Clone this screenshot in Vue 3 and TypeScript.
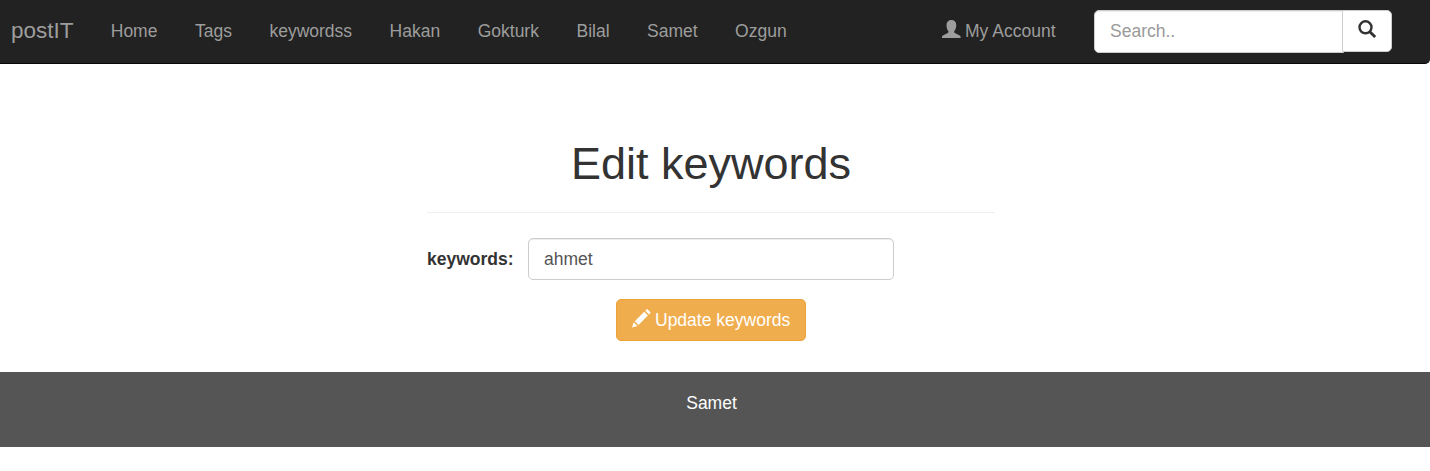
<script setup lang="ts">
import { ref } from 'vue'

const links: string[] = ['Home', 'Tags', 'keywordss', 'Hakan', 'Gokturk', 'Bilal', 'Samet', 'Ozgun']
const keyword = ref<string>('ahmet')
const query = ref<string>('')
</script>

<template>
  <div class="page">
    <nav class="navbar">
      <a class="brand">postIT</a>
      <ul class="links">
        <li v-for="link in links" :key="link"><a>{{ link }}</a></li>
      </ul>
      <a class="account">
        <svg class="icon" viewBox="0 0 19 19" aria-hidden="true">
          <path d="M9.400 0C6.300 0 4.500 2 4.500 5c0 2.800.8 5.200 2 6.500v.6c0 .5-.3.8-.8 1L1.300 15.200C.3 15.700 0 16.200 0 17.200V18h18.600v-.8c0-1-.3-1.500-1.300-2l-4.400-2.100c-.5-.2-.8-.5-.8-1v-.6c1.200-1.300 2.200-3.700 2.200-6.500C14.300 2 12.500 0 9.400 0z" />
        </svg>
        <span>My Account</span>
      </a>
      <form class="search" @submit.prevent>
        <input v-model="query" class="field search-field" type="text" placeholder="Search.." />
        <button class="search-button" type="submit" aria-label="Search">
          <svg class="icon" viewBox="0 0 19 19" aria-hidden="true">
            <circle cx="7.500" cy="7.300" r="6" fill="none" stroke="currentColor" stroke-width="2.400" />
            <path d="M11.800 11.700l5.400 5.300" fill="none" stroke="currentColor" stroke-width="2.900" />
          </svg>
        </button>
      </form>
    </nav>

    <main class="content">
      <h1>Edit keywords</h1>
      <hr />
      <form @submit.prevent>
        <div class="row">
          <label for="keywords">keywords:</label>
          <input id="keywords" v-model="keyword" class="field keyword-field" type="text" />
        </div>
        <button class="update" type="submit">
          <svg class="icon" viewBox="0 0 19 19" aria-hidden="true">
            <path d="M14.600 .4c.4-.4.800-.4 1.200 0l2.500 2.500c.4.4.4.800 0 1.200l-1.300 1.300-3.700-3.700zM12.200 2.800l3.700 3.700-9.400 9.400-3.700-3.700zM1.700 13.300l3.700 3.700L0 18.500z" />
          </svg>
          <span>Update keywords</span>
        </button>
      </form>
    </main>

    <footer class="footer">Samet</footer>
  </div>
</template>

<style>
body {
  margin: 0;
  background: #fff;
}
</style>

<style scoped>
.page,
.page * {
  box-sizing: border-box;
}

.page {
  color: #333;
  font: 17.5px/25px "Liberation Sans", Arial, sans-serif;
}

.navbar {
  display: flex;
  align-items: flex-start;
  height: 64px;
  padding: 10px 38px 0 11px;
  background: #222;
  border-bottom: 1px solid #080808;
  border-radius: 0 0 5px 0;
  color: #9d9d9d;
}

.brand {
  width: 81px;
  line-height: 42px;
  font-size: 22.5px;
}

.links {
  display: flex;
  margin: 0;
  padding: 0;
  list-style: none;
  line-height: 42px;
}

.links a {
  display: block;
  padding: 0 18.75px;
}

.icon {
  display: block;
  flex: none;
  width: 19px;
  height: 19px;
  fill: currentColor;
}

.account {
  display: flex;
  gap: 3.5px;
  margin-left: auto;
  margin-right: 38.5px;
  line-height: 42px;
}

.account .icon {
  margin-top: 10px;
  margin-left: -1px;
  margin-right: 0.5px;
}

.search {
  display: flex;
  align-items: flex-start;
}

.field {
  display: block;
  margin: 0;
  padding: 0 15px;
  border: 1px solid #ccc;
  border-radius: 5px;
  outline: 0;
  background: #fff;
  box-shadow: inset 0 1px 1px rgba(0, 0, 0, 0.075);
  color: #555;
  font: inherit;
}

.field::placeholder {
  color: #999;
  opacity: 1;
}

.search-field {
  width: 250px;
  height: 43px;
  border-radius: 5px 0 0 5px;
}

.search-button {
  width: 50px;
  height: 42px;
  margin: 0 0 0 -2px;
  padding: 0 0 3px 15px;
  border: 1px solid #ccc;
  border-radius: 0 5px 5px 0;
  background: #fff;
  color: #333;
}

.content {
  width: 568px;
  height: 308px;
  margin-left: 427px;
  padding-top: 75px;
}

h1 {
  margin: 0;
  font-size: 45px;
  font-weight: 500;
  line-height: 50px;
  text-align: center;
}

hr {
  height: 1px;
  margin: 23px 0 25px;
  border: 0;
  background: #eee;
}

.row {
  display: flex;
  align-items: center;
}

label {
  width: 101px;
  font-weight: 700;
}

.keyword-field {
  width: 366px;
  height: 42px;
}

.update {
  display: flex;
  gap: 4px;
  width: 190px;
  height: 42px;
  margin: 19px auto 0;
  padding: 0 0 0 15px;
  border: 1px solid #eea236;
  border-radius: 5px;
  background: #f0ad4e;
  color: #fff;
  font: inherit;
  line-height: 40px;
  white-space: nowrap;
}

.update .icon {
  margin-top: 9px;
}

.footer {
  height: 75px;
  padding: 19px 7px 0 0;
  background: #555;
  color: #fff;
  text-align: center;
}
</style>
